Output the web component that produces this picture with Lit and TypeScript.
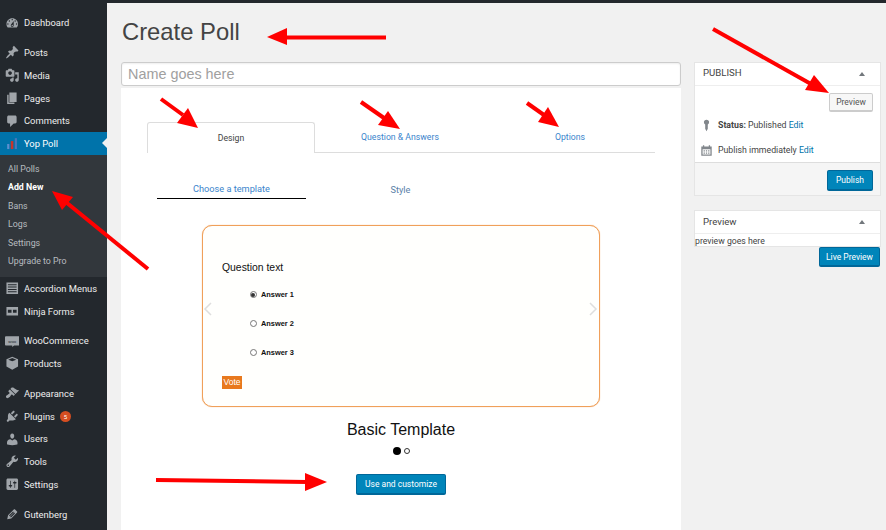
import { LitElement, html, css, svg } from "lit";
import { customElement } from "lit/decorators.js";

const P: Record<string, string> = {
  dashboard: "M3.76 16h12.48c1.1-1.37 1.76-3.11 1.76-5 0-4.42-3.58-8-8-8s-8 3.58-8 8c0 1.89.66 3.63 1.76 5zM10 4c.55 0 1 .45 1 1s-.45 1-1 1-1-.45-1-1 .45-1 1-1zM6 6c.55 0 1 .45 1 1s-.45 1-1 1-1-.45-1-1 .45-1 1-1zm8 0c.55 0 1 .45 1 1s-.45 1-1 1-1-.45-1-1 .45-1 1-1zm-5.37 5.55L12 7v6c0 1.1-.9 2-2 2s-2-.9-2-2c0-.57.24-1.08.63-1.45zM4 10c.55 0 1 .45 1 1s-.45 1-1 1-1-.45-1-1 .45-1 1-1zm12 0c.55 0 1 .45 1 1s-.45 1-1 1-1-.45-1-1 .45-1 1-1zm-5 3c0-.55-.45-1-1-1s-1 .45-1 1 .45 1 1 1 1-.45 1-1z",
  post: "M10.44 3.02l1.82-1.82 6.36 6.35-1.83 1.82c-1.05-.68-2.48-.57-3.41.36l-.75.75c-.92.93-1.04 2.35-.35 3.41l-1.83 1.82-2.41-2.41-2.8 2.79c-.42.42-3.38 2.71-3.8 2.29s1.86-3.39 2.28-3.81l2.79-2.79L4.1 9.36l1.83-1.82c1.05.69 2.48.57 3.4-.36l.75-.75c.93-.92 1.05-2.35.36-3.41z",
  media: "M13 11V4c0-.55-.45-1-1-1h-1.67L9 1H5L3.67 3H2c-.55 0-1 .45-1 1v7c0 .55.45 1 1 1h10c.55 0 1-.45 1-1zM7 4.5c1.38 0 2.5 1.12 2.5 2.5S8.38 9.5 7 9.5 4.5 8.38 4.5 7 5.62 4.5 7 4.5zM14 6h5v10.5c0 1.38-1.12 2.5-2.5 2.5S14 17.88 14 16.5s1.12-2.5 2.5-2.5c.17 0 .34.02.5.05V9h-3V6zm-4 8.05V13h2v3.5c0 1.38-1.12 2.5-2.5 2.5S7 17.88 7 16.5 8.12 14 9.5 14c.17 0 .34.02.5.05z",
  page: "M6 15V2h10v13H6zm-1 1h8v2H3V5h2v11z",
  comments: "M5 2h9c1.1 0 2 .9 2 2v7c0 1.1-.9 2-2 2h-2l-5 5v-5H5c-1.1 0-2-.9-2-2V4c0-1.1.9-2 2-2z",
  appearance: "M14.48 11.06L7.41 3.99l1.5-1.5c.5-.56 2.3-.47 3.51.32 1.21.8 1.43 1.28 2.91 2.1 1.18.64 2.45 1.26 4.45.85zm-.71.71L6.7 4.7 4.93 6.47c-.39.39-.39 1.02 0 1.41l1.06 1.06c.39.39.39 1.03 0 1.42-.6.6-1.43 1.11-2.21 1.69-.35.26-.7.53-1.01.84C1.43 13.23.78 15 1.94 16.16c1.15 1.16 2.93.51 4.27-.83.31-.31.58-.66.84-1.01.58-.78 1.09-1.61 1.69-2.21.39-.39 1.02-.39 1.41 0l1.06 1.06c.39.39 1.02.39 1.41 0z",
  plugins: "M13.11 4.36L9.87 7.6 8 5.73l3.24-3.24c.35-.34 1.05-.2 1.56.32.52.51.66 1.21.31 1.55zm-8 1.77l.91-1.12 9.01 9.01-1.19.84c-.71.71-2.63 1.16-3.82 1.16H6.14L4.9 17.26c-.59.59-1.54.59-2.12 0-.59-.58-.59-1.53 0-2.12l1.24-1.24v-3.88c0-1.13.4-3.19 1.09-3.89zm7.26 3.97l3.24-3.24c.34-.35 1.04-.21 1.55.31.52.51.66 1.21.31 1.55l-3.24 3.25z",
  users: "M10 9.25c-2.27 0-2.73-3.44-2.73-3.44C7 4.02 7.82 2 9.97 2c2.16 0 2.98 2.02 2.71 3.81 0 0-.41 3.44-2.68 3.44zm0 2.57L12.72 10c2.39 0 4.52 2.33 4.52 4.53v2.49s-3.65 1.13-7.24 1.13c-3.65 0-7.24-1.13-7.24-1.13v-2.49c0-2.25 1.94-4.48 4.47-4.48z",
  tools: "M16.68 9.77c-1.34 1.34-3.3 1.67-4.95.99l-5.41 6.52c-.99.99-2.59.99-3.58 0s-.99-2.59 0-3.57l6.52-5.42c-.68-1.65-.35-3.61.99-4.95 1.28-1.28 3.12-1.62 4.72-1.06l-2.89 2.89 2.82 2.82 2.86-2.87c.53 1.58.18 3.39-1.08 4.65zM3.81 16.21c.4.39 1.04.39 1.43 0 .4-.4.4-1.04 0-1.43-.39-.4-1.03-.4-1.43 0-.39.39-.39 1.03 0 1.43z",
  settings: "M18 16V4c0-1.1-.9-2-2-2H4c-1.1 0-2 .9-2 2v12c0 1.1.9 2 2 2h12c1.1 0 2-.9 2-2zM8 11h1c.55 0 1 .45 1 1s-.45 1-1 1H8v1.5c0 .28-.22.5-.5.5s-.5-.22-.5-.5V13H6c-.55 0-1-.45-1-1s.45-1 1-1h1V5.5c0-.28.22-.5.5-.5s.5.22.5.5V11zm5-2h-1c-.55 0-1-.45-1-1s.45-1 1-1h1V5.5c0-.28.22-.5.5-.5s.5.22.5.5V7h1c.55 0 1 .45 1 1s-.45 1-1 1h-1v5.5c0 .28-.22.5-.5.5s-.5-.22-.5-.5V9z",
  edit: "M13.89 3.39l2.71 2.72c.46.46.42 1.24.03 1.64l-8.01 8.02-5.56 1.16 1.16-5.58s7.6-7.63 7.99-8.03c.39-.39 1.22-.39 1.68.07zm-2.73 2.79l-5.59 5.61 1.11 1.11 5.54-5.65zm-2.97 8.23l5.58-5.6-1.07-1.08-5.59 5.6z",
  accordion: "M2 2h16v16H2zM4 4.5v1.4h12V4.5zM4 7.7v1.4h12V7.7zM4 10.9v1.4h12v-1.4zM4 14.1v1.4h12v-1.4z",
  ninja: "M2 4h16v12H2zM4 8v4h5V8zM11 8v4h5V8z",
  woo: "M1.500 3h17c.8 0 1.500.6 1.500 1.500v10c0 .8-.7 1.500-1.500 1.500h-6l-2.500 2v-2h-8.500c-.8 0-1.500-.7-1.500-1.500v-10C0 3.600.7 3 1.500 3z",
  products: "M10 1l8 3.5v10L10 19l-8-4.500v-10zM10 2.800L4.500 5 10 7.400 15.500 5z",
};

type Item = { label: string; icon: string; sep?: boolean; badge?: string };

const TOP: Item[] = [
  { label: "Dashboard", icon: "dashboard" },
  { label: "Posts", icon: "post", sep: true },
  { label: "Media", icon: "media" },
  { label: "Pages", icon: "page" },
  { label: "Comments", icon: "comments" },
];
const SUB = ["All Polls", "Add New", "Bans", "Logs", "Settings", "Upgrade to Pro"];
const REST: Item[] = [
  { label: "Accordion Menus", icon: "accordion" },
  { label: "Ninja Forms", icon: "ninja" },
  { label: "WooCommerce", icon: "woo", sep: true },
  { label: "Products", icon: "products" },
  { label: "Appearance", icon: "appearance", sep: true },
  { label: "Plugins", icon: "plugins", badge: "5" },
  { label: "Users", icon: "users" },
  { label: "Tools", icon: "tools" },
  { label: "Settings", icon: "settings" },
  { label: "Gutenberg", icon: "edit", sep: true },
];

const ARROWS = [
  { s: [386, 37.500, 285, 37.500], h: "267,37 287,28 287,45" },
  { s: [161, 99, 183, 115], h: "198,128 177,123 188,108" },
  { s: [361, 102, 384, 118], h: "400,129 378,125 388,111" },
  { s: [527, 103, 544, 115], h: "559,127 538,122 548,107" },
  { s: [713, 29, 811, 84], h: "829,93 805,90 814,75" },
  { s: [148, 269, 67, 203], h: "52,191 62,210 73,197" },
  { s: [156, 480, 307, 482], h: "327,482 305,473 305,491" },
];

@customElement("app-root")
export class AppRoot extends LitElement {
  static styles = css`
    :host { display: block; width: 886px; height: 530px; position: relative; overflow: hidden; background: #f1f1f1; font-family: Roboto, sans-serif; color: #444; }
    .top { height: 3px; background: #23282d; }
    .page { display: flex; height: 527px; }
    .side { width: 107px; flex: none; background: #23282d; padding-top: 8.5px; box-sizing: border-box; overflow: hidden; }
    .item { display: flex; align-items: center; height: 22.75px; padding-left: 4.5px; gap: 5px; color: #eee; font-size: 9.400px; position: relative; white-space: nowrap; }
    .item.sep { margin-top: 7px; }
    .item svg { width: 14.5px; height: 14.5px; flex: none; fill: #a0a5aa; }
    .item.active { background: #0073aa; color: #fff; }
    .item.active::after { content: ""; position: absolute; right: 0; top: 6px; border: 5.500px solid transparent; border-right-color: #f1f1f1; border-left-width: 0; }
    .badge { display: inline-flex; align-items: center; justify-content: center; width: 11px; height: 11px; border-radius: 50%; background: #d54e21; color: #fff; font-size: 6px; }
    .sub { background: #32373c; padding: 4.750px 0 6.250px 8px; }
    .sub div { height: 18.500px; line-height: 18.500px; font-size: 8.800px; color: rgba(240,245,250,.7); }
    .sub div.cur { color: #fff; font-weight: 700; }

    .main { width: 560px; margin-left: 14px; flex: none; display: flex; flex-direction: column; }
    h1 { margin: 0; height: 59px; box-sizing: border-box; padding: 13px 0 0 1px; font: 400 23.800px/32px "Liberation Sans", sans-serif; color: #444; }
    .name { height: 24px; box-sizing: border-box; border: 1px solid #ccc; border-radius: 3px; background: #fff; padding-left: 6px; font: 14.400px/22px "Liberation Sans", sans-serif; color: #a0a0a0; box-shadow: inset 0 1px 2px rgba(0,0,0,.07); }
    .panel { margin-top: 2px; flex: 1; background: #fff; display: flex; flex-direction: column; }

    .tabs { display: flex; margin: 34px 0 0 26px; width: 508px; height: 31px; box-sizing: border-box; border-bottom: 1px solid #ddd; font-size: 8.700px; }
    .tab { width: 170px; display: flex; align-items: center; justify-content: center; color: #3a84cc; box-sizing: border-box; }
    .tab.on { width: 168px; height: 31px; flex: none; color: #444; background: #fff; border: 1px solid #ddd; border-bottom: 0; border-radius: 3px 3px 0 0; }
    .subtabs { display: flex; gap: 20px; margin: 28px 0 0 36px; font-size: 9.200px; }
    .st { width: 149px; height: 18px; box-sizing: border-box; text-align: center; line-height: 15px; color: #3a84cc; }
    .st.on { border-bottom: 1px solid #000; }
    .st.plain { color: #5a7fa8; padding-top: 1px; }

    .card { position: relative; margin: 26px 0 0 81px; width: 398px; height: 182px; box-sizing: border-box; border: 1px solid #f0a05a; box-shadow: 0 0 1px #f0a05a; border-radius: 10px; padding: 35px 0 0 19px; font-family: "Liberation Sans", sans-serif; color: #111; background: #fffffd; }
    .q { font-size: 10.400px; line-height: 14px; height: 19px; }
    .ans { display: flex; align-items: center; gap: 4.500px; height: 29px; margin-left: 27.500px; font-size: 7.400px; font-weight: 700; }
    .radio { width: 5px; height: 5px; border-radius: 50%; border: 1px solid #767676; background: #fff; position: relative; box-sizing: content-box; }
    .radio.on::after { content: ""; position: absolute; inset: 0.500px; border-radius: 50%; background: #333; }
    .vote { display: inline-block; margin-top: 9px; width: 20px; height: 12.500px; background: #e8791e; color: #fff; font-size: 8.500px; line-height: 12.500px; text-align: center; }
    .chev { position: absolute; top: 76px; width: 10px; height: 14px; stroke: #dedede; fill: none; stroke-width: 1.500px; }
    .chev.l { left: 0; }
    .chev.r { right: 1px; }

    .tname { margin-top: 14px; text-align: center; font: 16px/18px "Liberation Sans", sans-serif; color: #111; width: 560px; }
    .dots { display: flex; justify-content: center; align-items: center; gap: 3px; margin-top: 7px; height: 10px; width: 560px; }
    .d1 { width: 8px; height: 8px; border-radius: 50%; background: #000; }
    .d2 { width: 4px; height: 4px; border-radius: 50%; border: 1px solid #333; }
    .primary { background: #0085ba; border: 1px solid #006799; border-bottom-width: 2px; border-radius: 2px; color: #fff; font-size: 8.500px; display: flex; align-items: center; justify-content: center; box-sizing: border-box; }
    .use { margin: 18px 0 0 235px; width: 90px; height: 21px; }

    .right { width: 187px; margin-left: 13px; flex: none; padding-top: 59px; display: flex; flex-direction: column; }
    .box { background: #fff; border: 1px solid #e5e5e5; box-sizing: border-box; }
    .bh { height: 23px; box-sizing: border-box; display: flex; align-items: center; justify-content: space-between; padding: 0 15px 0 8px; border-bottom: 1px solid #eee; font-size: 9.600px; color: #444; }
    .bh span:first-child { padding-bottom: 3px; }
    .box2 .bh span:first-child { padding-bottom: 1px; }
    .tri { width: 0; height: 0; border: 3px solid transparent; border-top: 0; border-bottom: 4px solid #72777c; }
    .pb { height: 76px; display: flex; flex-direction: column; font-size: 8.750px; color: #444; }
    .prow { display: flex; justify-content: flex-end; padding: 7px 7px 0 0; }
    .pv { width: 44px; height: 19px; box-sizing: border-box; border: 1px solid #ccc; border-bottom-width: 2px; border-radius: 2px; background: #f7f7f7; font-size: 8.500px; color: #555; display: flex; align-items: center; justify-content: center; }
    .line { display: flex; align-items: center; height: 14px; padding-left: 5px; gap: 5px; white-space: pre; }
    .line svg { width: 13px; height: 13px; flex: none; fill: #82878c; }
    .line b { font-weight: 700; }
    .line a { color: #0073aa; }
    .st1 { margin-top: 6px; }
    .st2 { margin-top: 11px; }
    .pf { height: 33px; box-sizing: border-box; background: #f5f5f5; border-top: 1px solid #ddd; display: flex; justify-content: flex-end; padding: 7px 7px 0 0; }
    .pub { width: 46px; height: 20.500px; }
    .box2 { margin-top: 14px; height: 37px; }
    .pt { font-size: 8.700px; line-height: 14px; color: #444; }
    .live { width: 61px; height: 20px; align-self: flex-end; margin-right: 1px; }

    .over { position: absolute; left: 0; top: 0; width: 886px; height: 530px; pointer-events: none; }
  `;

  private icon(name: string) {
    const p = P[name];
    return html`<svg viewBox="0 0 20 20"><path fill-rule="evenodd" d=${p}></path>${name === "woo" ? svg`<text x="10" y="12" font-size="6" text-anchor="middle" fill="#23282d" font-family="Liberation Sans">woo</text>` : ""}</svg>`;
  }

  private row(i: Item) {
    return html`<div class="item ${i.sep ? "sep" : ""}">${this.icon(i.icon)}<span>${i.label}</span>${i.badge ? html`<span class="badge">${i.badge}</span>` : ""}</div>`;
  }

  render() {
    return html`
      <div class="top"></div>
      <div class="page">
        <nav class="side">
          ${TOP.map((i) => this.row(i))}
          <div class="item active">
            <svg viewBox="0 0 20 20"><rect x="3" y="11" width="3" height="7" fill="#5b8fd0"></rect><rect x="8" y="7" width="3.500" height="11" fill="#c8342c"></rect><rect x="13.500" y="3" width="3" height="15" fill="#4a77b8"></rect></svg>
            <span>Yop Poll</span>
          </div>
          <div class="sub">${SUB.map((s) => html`<div class=${s === "Add New" ? "cur" : ""}>${s}</div>`)}</div>
          ${REST.map((i) => this.row(i))}
        </nav>

        <main class="main">
          <h1>Create Poll</h1>
          <div class="name">Name goes here</div>
          <section class="panel">
            <div class="tabs">
              <div class="tab on">Design</div>
              <div class="tab">Question &amp; Answers</div>
              <div class="tab">Options</div>
            </div>
            <div class="subtabs">
              <div class="st on">Choose a template</div>
              <div class="st plain">Style</div>
            </div>
            <div class="card">
              <div class="q">Question text</div>
              <div class="ans"><span class="radio on"></span>Answer 1</div>
              <div class="ans"><span class="radio"></span>Answer 2</div>
              <div class="ans"><span class="radio"></span>Answer 3</div>
              <span class="vote">Vote</span>
              <svg class="chev l" viewBox="0 0 10 14"><path d="M8 1 2 7l6 6"></path></svg>
              <svg class="chev r" viewBox="0 0 10 14"><path d="M2 1l6 6-6 6"></path></svg>
            </div>
            <div class="tname">Basic Template</div>
            <div class="dots"><span class="d1"></span><span class="d2"></span></div>
            <div class="primary use">Use and customize</div>
          </section>
        </main>

        <aside class="right">
          <div class="box">
            <div class="bh"><span>PUBLISH</span><span class="tri"></span></div>
            <div class="pb">
              <div class="prow"><div class="pv">Preview</div></div>
              <div class="line st1">
                <svg viewBox="0 0 20 20"><path d="M10 1a4 4 0 0 1 2 7.500V15l-2 4-2-4V8.500A4 4 0 0 1 10 1z"></path></svg>
                <span><b>Status:</b> Published <a>Edit</a></span>
              </div>
              <div class="line st2">
                <svg viewBox="0 0 20 20"><path fill-rule="evenodd" d="M2 4h2.500V2h2v2h7V2h2v2H18v14H2zM4 8v8h12V8zM5.500 9.500h2v2h-2zM9 9.500h2v2H9zM12.500 9.500h2v2h-2zM5.500 13h2v2h-2zM9 13h2v2H9zM12.500 13h2v2h-2z"></path></svg>
                <span>Publish immediately <a>Edit</a></span>
              </div>
            </div>
            <div class="pf"><div class="primary pub">Publish</div></div>
          </div>
          <div class="box box2">
            <div class="bh"><span>Preview</span><span class="tri"></span></div>
            <div class="pt">preview goes here</div>
          </div>
          <div class="primary live">Live Preview</div>
        </aside>
      </div>

      <svg class="over" viewBox="0 0 886 530">
        ${ARROWS.map(
          (a) => svg`<line x1=${a.s[0]} y1=${a.s[1]} x2=${a.s[2]} y2=${a.s[3]} stroke="#f00" stroke-width="4"></line><polygon points=${a.h} fill="#f00"></polygon>`
        )}
      </svg>
    `;
  }
}
